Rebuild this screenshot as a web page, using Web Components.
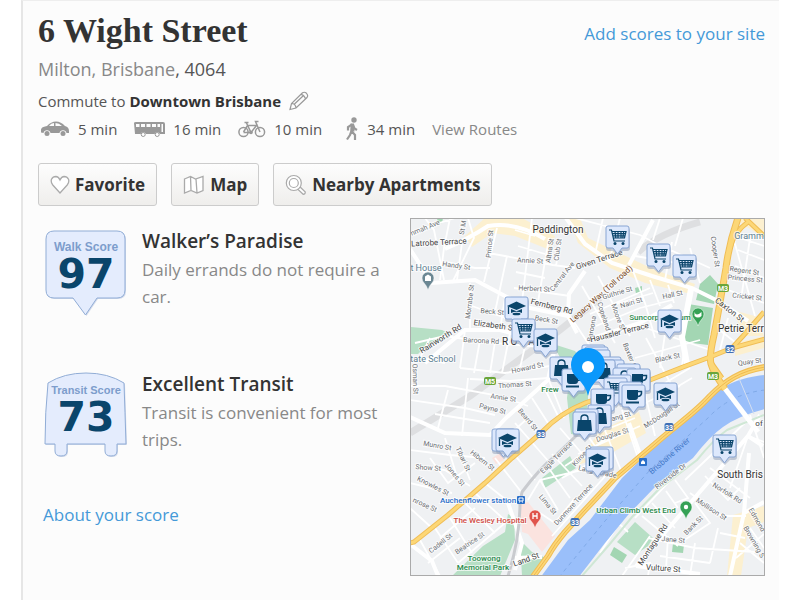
<!DOCTYPE html>
<html lang="en">
<head>
<meta charset="utf-8">
<meta name="viewport" content="width=device-width, initial-scale=1">
<title>6 Wight Street</title>
<style>
    body {
        margin: 0;
        background: #fff;
        color: #555;
        font-family: "Open Sans", "Noto Sans", sans-serif;
        font-size: 17px;
    }
</style>
</head>
<body>
<score-page>
    <address-header slot="header" street="6 Wight Street" postcode="4064">
        <commute-time icon="car">5 min</commute-time>
        <commute-time icon="bus">16 min</commute-time>
        <commute-time icon="bike">10 min</commute-time>
        <commute-time icon="walk">34 min</commute-time>
    </address-header>
    <action-button slot="actions" icon="heart">Favorite</action-button>
    <action-button slot="actions" icon="map">Map</action-button>
    <action-button slot="actions" icon="search">Nearby Apartments</action-button>
    <score-card kind="walk" label="Walk Score" value="97">
        <span slot="title">Walker’s Paradise</span>
        Daily errands do not require a car.
    </score-card>
    <score-card kind="transit" label="Transit Score" value="73">
        <span slot="title">Excellent Transit</span>
        Transit is convenient for most trips.
    </score-card>
    <area-map slot="map"></area-map>
</score-page>

<script>
const ICONS = {
    car: `<svg width="30" height="18" viewBox="0 0 30 18"><path fill="#999" fill-rule="evenodd" d="M1 12.5V9.500Q1.500 7 5 6.500L7 6Q11 1.500 16 1.500Q21 1.500 25 6Q29 7 29 11V13H26.500A3.600 3.600 0 0 0 19.500 13H10.500A3.600 3.600 0 0 0 3.500 13ZM9 6H14V3Q11 3.200 9 6ZM15.500 3V6H22Q19 3 15.500 3Z"/><circle cx="7" cy="13.500" r="2.500" fill="#999"/><circle cx="23" cy="13.500" r="2.500" fill="#999"/></svg>`,
    bus: `<svg width="31" height="18" viewBox="0 0 31 18"><path fill="#999" fill-rule="evenodd" d="M0 3Q0 2 2 2H29Q31 2 31 4V14H26A3 3 0 0 0 20.500 14H12A3 3 0 0 0 6.500 14H1ZM2 4V7H5.500V4ZM7 4V7H11V4ZM12.500 4V7H16.500V4ZM18 4V7H22V4ZM23.500 4V7H26V4ZM27.500 4V12H29V4Z"/><circle cx="9.200" cy="14.500" r="2" fill="#fff" stroke="#999"/><circle cx="23.200" cy="14.500" r="2" fill="#fff" stroke="#999"/></svg>`,
    bike: `<svg width="28" height="18" viewBox="0 0 28 18"><g fill="none" stroke="#999" stroke-width="1.500"><circle cx="5.500" cy="12" r="4.600"/><circle cx="22" cy="12" r="4.600"/><path d="M5.500 12L9.500 5.500H18.500L13 12.500L8.500 3M13 12.500H5.500M22 12L17.500 1.500H20.500M6.500 2.500H10.500"/></g><circle cx="13" cy="12.500" r="1.800" fill="#999"/></svg>`,
    walk: `<svg width="14" height="24" viewBox="0 0 14 24"><circle cx="9" cy="3" r="2.700" fill="#999"/><path d="M7.500 7L6.500 14L10 18V23M6.500 14L5 18L2 22.500M7 7.500L3 10V13.500M8 8L9.500 11.500L12 13" fill="none" stroke="#999" stroke-width="2.200"/><path d="M5.500 6.500H9L9.500 14.500H5.500Z" fill="#999"/></svg>`,
    pencil: `<svg width="20" height="20" viewBox="0 0 20 20"><path d="M1 18.500L2.500 12.500L13.500 1.800Q15.500 .5 17.500 2.300Q19.500 4.500 18 6.500L7 17ZM2.500 12.500Q6.500 12.500 7 17M12 3.300Q15.500 4 16.500 8M5.500 13L14 5" fill="none" stroke="#999" stroke-width="1.200"/></svg>`,
    heart: `<svg width="20" height="20" viewBox="0 0 20 20"><path d="M10 18L2.800 10Q.5 7 1.500 4.200Q3 1.500 5.800 1.500Q8.500 1.600 10 5Q11.500 1.600 14.200 1.500Q17 1.500 18.500 4.200Q19.500 7 17.200 10Z" fill="#fff" stroke="#aaa" stroke-width="1.300"/></svg>`,
    map: `<svg width="22" height="20" viewBox="0 0 22 20"><path d="M1.500 4L7.500 1.500L12.500 4L20 1.500V15.500L14 18L8 15.500L1.500 18ZM7.500 1.500L8 15.500M13 4L14 18" fill="#fff" stroke="#aaa" stroke-width="1.300"/></svg>`,
    search: `<svg width="22" height="22" viewBox="0 0 22 22"><g fill="#fff" stroke="#aaa" stroke-width="1.200"><path d="M12.500 15L14.800 12.700L20.300 18Q20.300 20.300 18.200 20.300Z"/><circle cx="8.800" cy="9" r="7.500"/><circle cx="8.800" cy="9" r="4.500"/></g></svg>`
};

class ScorePage extends HTMLElement {
    constructor() {
        super();
        this.attachShadow({ mode: 'open' });
    }

    connectedCallback() {
        this.shadowRoot.innerHTML = `
            <style>
                :host {
                    display: block;
                    box-sizing: border-box;
                    min-height: 100vh;
                    margin: 0 21px;
                    padding: 8px 14px 24px 15px;
                    background: #fcfcfc;
                    border-top: 1px solid #eee;
                    border-left: 2px solid #e6e6e6;
                }
                .actions {
                    display: flex;
                    flex-wrap: wrap;
                    gap: 14px;
                    margin: 21px 0 12px;
                }
                .body {
                    display: grid;
                    grid-template-columns: minmax(0, 1fr) minmax(0, 355px);
                    gap: 24px;
                }
                .scores {
                    display: flex;
                    flex-direction: column;
                    gap: 53px;
                    padding: 11px 0 0 6px;
                }
                a {
                    display: inline-block;
                    margin: 41px 0 0 5px;
                    color: #4499d8;
                    text-decoration: none;
                    line-height: 24px;
                }
            </style>
            <slot name="header"></slot>
            <div class="actions"><slot name="actions"></slot></div>
            <div class="body">
                <div>
                    <div class="scores"><slot></slot></div>
                    <a href="#about">About your score</a>
                </div>
                <slot name="map"></slot>
            </div>
        `;
    }
}

class AddressHeader extends HTMLElement {
    constructor() {
        super();
        this.attachShadow({ mode: 'open' });
    }

    connectedCallback() {
        this.shadowRoot.innerHTML = `
            <style>
                :host {
                    display: block;
                }
                .top {
                    display: flex;
                    justify-content: space-between;
                    align-items: center;
                }
                h1 {
                    margin: 0;
                    font: bold 34px/44px "Liberation Serif", serif;
                    color: #333;
                }
                a {
                    color: #888;
                    text-decoration: none;
                }
                .embed {
                    padding-top: 4px;
                    color: #4499d8;
                }
                .place {
                    font-size: 18px;
                    line-height: 33px;
                }
                .commute {
                    display: flex;
                    align-items: center;
                    gap: 8px;
                    font-size: 15px;
                    line-height: 30px;
                }
                .commute strong {
                    color: #333;
                }
                button {
                    display: flex;
                    padding: 0;
                    border: 0;
                    background: none;
                }
                .times {
                    display: flex;
                    flex-wrap: wrap;
                    align-items: center;
                    gap: 17px;
                    font-size: 15px;
                    line-height: 26px;
                }
            </style>
            <div class="top">
                <h1>${this.getAttribute('street')}</h1>
                <a class="embed" href="#embed">Add scores to your site</a>
            </div>
            <div class="place"><a href="#milton">Milton,</a> <a href="#brisbane">Brisbane</a>, ${this.getAttribute('postcode')}</div>
            <div class="commute">
                <span>Commute to <strong>Downtown Brisbane</strong></span>
                <button type="button" aria-label="Edit commute">${ICONS.pencil}</button>
            </div>
            <div class="times"><slot></slot><a href="#routes">View Routes</a></div>
        `;
    }
}

class CommuteTime extends HTMLElement {
    constructor() {
        super();
        this.attachShadow({ mode: 'open' });
    }

    connectedCallback() {
        this.shadowRoot.innerHTML = `
            <style>
                :host {
                    display: flex;
                    align-items: center;
                    gap: 8px;
                    padding-left: 2px;
                }
                :host([icon="bus"]), :host([icon="bike"]) {
                    padding-left: 0;
                }
                :host([icon="walk"]) {
                    padding-left: 6px;
                }
            </style>
            ${ICONS[this.getAttribute('icon')]}
            <span><slot></slot></span>
        `;
    }
}

class ActionButton extends HTMLElement {
    constructor() {
        super();
        this.attachShadow({ mode: 'open' });
    }

    connectedCallback() {
        this.shadowRoot.innerHTML = `
            <style>
                :host {
                    display: block;
                }
                button {
                    display: flex;
                    align-items: center;
                    gap: 5px;
                    height: 43px;
                    padding: 0 11px;
                    border: 1px solid #ccc;
                    border-radius: 3px;
                    background: linear-gradient(#fdfdfd, #efeeec);
                    color: #333;
                    font: bold 17px/24px "Open Sans", "Noto Sans", sans-serif;
                }
            </style>
            <button type="button">${ICONS[this.getAttribute('icon')]}<span><slot></slot></span></button>
        `;
    }
}

class ScoreCard extends HTMLElement {
    constructor() {
        super();
        this.attachShadow({ mode: 'open' });
    }

    connectedCallback() {
        const walk = this.getAttribute('kind') === 'walk';
        const shape = walk
            ? 'M10 2H73Q81 2 81 10V61Q81 69 73 69H53L41.500 86L29 69H10Q2 69 2 61V10Q2 2 10 2Z'
            : 'M4 11Q20 1 42 1Q64 1 80 11Q81 40 82 72H73V79Q73 84 67 84Q61 84 61 79V72H23V79Q23 84 17 84Q11 84 11 79V72H1Q1 40 4 11Z';

        this.shadowRoot.innerHTML = `
            <style>
                :host {
                    display: grid;
                    grid-template-columns: 84px minmax(0, 1fr);
                    gap: 14px;
                }
                svg {
                    display: block;
                }
                .label {
                    font: bold 12px "Liberation Sans", sans-serif;
                    fill: #7d9dcc;
                }
                .transit {
                    font-size: 11px;
                }
                .value {
                    font: bold 41px "DejaVu Sans", sans-serif;
                    fill: #0a456b;
                }
                h2 {
                    margin: 0 0 2px;
                    font-size: 19px;
                    font-weight: 600;
                    line-height: 25px;
                    color: #333;
                }
                p {
                    margin: 0;
                    line-height: 27px;
                    color: #888;
                }
            </style>
            <svg width="84" height="90" viewBox="0 0 84 90">
                <path d="${shape}" fill="#d5dcec" transform="translate(1 1)"/>
                <path d="${shape}" fill="#e4ecfd" stroke="#91add6"/>
                <text class="label ${walk ? '' : 'transit'}" x="42" y="22" text-anchor="middle">${this.getAttribute('label')}</text>
                <text class="value" x="42" y="59" text-anchor="middle">${this.getAttribute('value')}</text>
            </svg>
            <div>
                <h2><slot name="title"></slot></h2>
                <p><slot></slot></p>
            </div>
        `;
    }
}

// [text, x, y, angle, class]
const LABELS = [
    ['Paddington', 148, 15, 0, 'town'],
    ['nmah Ave', 16, 12, -22],
    ['Latrobe Terrace', 29, 27, -3, 'main'],
    ['St M', 55, 10, -80],
    ['Prince St', 82, 26, -85],
    ['Annie St', 120, 45, 3],
    ['Altna St', 142, 33, -82],
    ['Club St', 150, 32, -82],
    ['Handy St', 46, 50, 8],
    ['Herbert St', 124, 73, 3],
    ['Central Ave', 154, 60, -52],
    ['Fernberg Rd', 141, 91, 14, 'main'],
    ['Morrabe St', 62, 84, -83],
    ['Beck St', 82, 96, 5],
    ['Beck St', 136, 104, 10],
    ['Elizabeth St', 84, 110, 8, 'main'],
    ['Given Terrace', 190, 44, -18, 'main'],
    ['Legacy Way (Toll road)', 193, 78, -42, 'toll'],
    ['Guthrie St', 208, 77, -17],
    ['Nairi St', 222, 87, -17],
    ['Hall St', 263, 79, -12],
    ['Moore St', 206, 100, 70],
    ['Copeland St', 193, 103, 72],
    ['Baroona', 184, 111, -80],
    ['Cooper St', 303, 34, 82],
    ['Gramm', 339, 21, 0, 'place'],
    ['Regent St', 334, 55, 9],
    ['Princess St', 335, 63, 5],
    ['Cricket St', 337, 81, 6],
    ['Caxton St', 318, 94, 38, 'main'],
    ['Suncorp Stadium', 250, 102, 0, 'green'],
    ['Petrie Terr', 331, 114, 0, 'town'],
    ['Haussler Terrace', 210, 117, -14, 'main'],
    ['t House', 16, 53, 0, 'place'],
    ['Rainworth Rd', 32, 123, -32, 'main'],
    ['Baroona Rd', 71, 125, 3],
    ['R O S A L I E', 119, 127, 0, 'town'],
    ['tate School', 23, 144, 0, 'place'],
    ['Osman St', 3, 161, 88],
    ['Howard St', 118, 152, -12],
    ['Thomas St', 105, 169, -4],
    ['Frew', 140, 174, 0, 'green'],
    ['Annie St', 93, 182, 8],
    ['Payne St', 82, 193, 14],
    ['Beard St', 116, 203, 50],
    ['Munro St', 27, 230, 10],
    ['Eagle Terrace', 148, 241, -45],
    ['Baxter St', 218, 139, 68],
    ['Black St', 258, 142, -12],
    ['Quay St', 340, 146, -8],
    ['McDougall St', 253, 199, -34],
    ['Douglas St', 203, 219, -17],
    ['Boomerang St', 200, 204, -17],
    ['Kilroe St', 174, 239, -48],
    ['Lang Parade', 187, 256, 12],
    ['Brisbane River', 261, 240, -41, 'river'],
    ['Riverside Dr', 262, 260, -38],
    ['of', 349, 208, 0, 'main'],
    ['South Bris', 330, 260, 0, 'town'],
    ['Show St', 18, 252, 4],
    ['Knowles St', 22, 270, 27],
    ['nrose St', 14, 289, 24],
    ['Jones St', 43, 258, 50],
    ['Tibari St', 51, 242, 65],
    ['Hibern St', 71, 244, 38],
    ['Auchenflower station', 68, 285, 0, 'rail'],
    ['The Wesley Hospital', 80, 305, 0, 'hospital'],
    ['Toowong', 74, 343, 0, 'green'],
    ['Memorial Park', 73, 352, 0, 'green'],
    ['Cadell St', 32, 327, -38],
    ['Beatrice St', 61, 327, -34],
    ['Land St', 117, 344, -20, 'main'],
    ['Lima St', 136, 288, 50],
    ['Dunmore Terrace', 165, 288, -48],
    ['Urban Climb West End', 226, 295, 0, 'green'],
    ['Norfolk Rd', 316, 277, 32],
    ['Mollison St', 300, 293, 33],
    ['Bank St', 285, 309, -45],
    ['Jane St', 263, 324, 5],
    ['Montague Rd', 245, 328, -57, 'main'],
    ['Vulture St', 253, 353, 4, 'main'],
    ['Browning S', 342, 325, 60],
    ['Edmond', 345, 303, 60]
];

// [icon, x, y], back to front; an empty icon is a marker hidden by its neighbours
const MARKERS = [
    ['cart', 196, 8], ['cart', 237, 26], ['cart', 263, 37],
    ['cap', 95, 79], ['cart', 102, 101], ['cap', 124, 111], ['cap', 248, 92],
    ['bag', 140, 139], ['cup', 152, 151],
    ['', 172, 127], ['', 175, 129], ['', 177, 132], ['', 188, 139], ['', 191, 142],
    ['bag', 182, 142], ['', 207, 146], ['bag', 203, 150], ['cup', 217, 151],
    ['', 198, 157], ['cart', 194, 160], ['', 209, 164], ['cup', 212, 167],
    ['cap', 244, 165], ['cup', 181, 171], ['bag', 178, 187], ['', 165, 191], ['bag', 163, 194],
    ['', 82, 211], ['cap', 86, 211], ['', 180, 229], ['cap', 176, 231], ['cart', 303, 217]
];

// [text, x, y, fill]
const SHIELDS = [
    ['M3', 313, 70, '#6aa53a'], ['M5', 80, 163, '#6aa53a'], ['M3', 303, 158, '#6aa53a'],
    ['33', 131, 216, '#3f6fb5'], ['32', 320, 131, '#3f6fb5'], ['33', 259, 209, '#3f6fb5'], ['33', 165, 304, '#3f6fb5']
];

const RIVER_ROAD = 'M355 149C330 153 315 163 300 178C285 195 265 208 245 226L205 260L175 292L155 314Q144 327 138 338L122 360';
const MILTON_ROAD = 'M0 325L4 324L38 297L75 265L102 240L132 214Q150 195 175 185L240 162L273 149L300 139L322 130L355 121';
const M3_ROAD = 'M328 0Q319 25 316 50L309 90L304 117Q299 138 301 146T315 171';

class AreaMap extends HTMLElement {
    constructor() {
        super();
        this.attachShadow({ mode: 'open' });
    }

    label([text, x, y, angle, kind = 'street']) {
        return `<text class="${kind}" x="${x}" y="${y}" transform="rotate(${angle} ${x} ${y})">${text}</text>`;
    }

    marker([icon, x, y]) {
        return `<g transform="translate(${x} ${y})"><use href="#tag"/>${icon ? `<use href="#${icon}"/>` : ''}</g>`;
    }

    shield([text, x, y, fill]) {
        const w = text[0] === 'M' ? 12 : 9;
        return `<rect x="${x - w / 2}" y="${y - 4}" width="${w}" height="8" rx="2" fill="${fill}"/><text class="shield" x="${x}" y="${y + 3}">${text}</text>`;
    }

    connectedCallback() {
        this.shadowRoot.innerHTML = `
            <style>
                :host {
                    display: block;
                    align-self: start;
                    border: 1px solid #aaa;
                }
                svg {
                    display: block;
                    width: 100%;
                    height: auto;
                }
                text {
                    font-family: Roboto, "Liberation Sans", sans-serif;
                    font-size: 7px;
                    text-anchor: middle;
                    fill: #6b6f73;
                    stroke: #fff;
                    stroke-width: 2px;
                    stroke-opacity: .7;
                    paint-order: stroke;
                }
                .main { font-size: 8px; fill: #444; }
                .town { font-size: 10px; fill: #333; }
                .place { font-size: 9px; fill: #5d7f92; }
                .green { font-size: 8px; font-weight: 500; fill: #2a8a4c; }
                .toll { font-size: 8px; fill: #744318; }
                .river { font-size: 8px; fill: #4378c8; stroke: none; }
                .rail { font-size: 8px; font-weight: 500; fill: #2a6fc9; }
                .hospital { font-size: 8px; font-weight: 500; fill: #d04a42; }
                .shield { font-size: 7px; font-weight: bold; fill: #fff; stroke: none; }
            </style>
            <svg viewBox="1 1 353 356" role="img" aria-label="Map of Milton, Brisbane">
                <defs>
                    <g id="tag">
                        <path d="M3 1H21Q24 1 24 4V21Q24 24 21 24H17L12 29L7 24H3Q0 24 0 21V4Q0 1 3 1Z" fill="#8d9bb5" opacity=".5" transform="translate(0 1)"/>
                        <path d="M2 0H21Q23 0 23 2V20Q23 22 21 22H16L11.500 28L7 22H2Q0 22 0 20V2Q0 0 2 0Z" fill="#dde8fc" stroke="#88a5d3"/>
                    </g>
                    <g id="cart">
                        <path d="M3 4H5.500L8 15H19M5.500 5.500H20L18.500 12H7M6.500 7.700H19.500M7 9.800H19M9 5.500L9.800 12M12 5.500V12M15 5.500V12M17.700 5.500L16.800 12" fill="none" stroke="#0a456b" stroke-width="1.200"/>
                        <circle cx="9" cy="17.500" r="1.500" fill="#0a456b"/><circle cx="17" cy="17.500" r="1.500" fill="#0a456b"/>
                    </g>
                    <g id="cap" fill="#0a456b">
                        <path d="M2 9L11.500 4.500L21 9L11.500 13Z"/>
                        <path d="M6 12L11.500 14.300L17 12V16Q11.500 13.500 6 16Z"/>
                        <path d="M3.500 9.500V17" stroke="#0a456b" stroke-width="1.300"/>
                        <ellipse cx="11.500" cy="17" rx="4" ry="1.300"/>
                    </g>
                    <g id="bag">
                        <path d="M5 8H18L19 19H4Z" fill="#0a456b"/>
                        <path d="M8 10V6.500Q8 3 11.500 3Q15 3 15 6.500V10" fill="none" stroke="#0a456b" stroke-width="1.300"/>
                    </g>
                    <g id="cup">
                        <path d="M5 5H16V12Q16 15 13 15H8Q5 15 5 12ZM4 16.500H17V18.500H4Z" fill="#0a456b"/>
                        <path d="M16 6.500H19.500Q20 11 16 11.500" fill="none" stroke="#0a456b" stroke-width="1.500"/>
                    </g>
                    <path id="drop" d="M0 10Q-1 6 -4 3Q-6 1 -6 -2A6 6 0 0 1 6 -2Q6 1 4 3Q1 6 0 10Z"/>
                </defs>
                <rect width="360" height="360" fill="#eff1f3"/>
                <!-- tunnels -->
                <path d="M0 215L60 178L150 112L190 80M228 34Q250 15 290 4" fill="none" stroke="#dedfe1" stroke-width="7"/>
                <!-- shopping areas -->
                <g fill="#fcf0d0">
                    <path d="M55 18L75 0H112L145 18L140 32L105 18L82 15L62 29ZM158 0H170L178 20L245 52L285 66L281 76L235 65L200 50L168 25Z"/>
                    <path d="M323 297L354 288V304L338 310L331 358H317ZM190 213L229 194L236 215L200 236L165 248ZM322 92L345 98L354 118H335ZM323 0H354V20ZM325 125L354 118V130L325 138Z"/>
                </g>
                <!-- parks -->
                <g fill="#b7dfc5">
                    <path d="M0 109L32 112L42 117L14 130L8 136H0ZM140 125L165 133L178 150L178 184L172 218L161 216L157 180Q162 150 140 125Z"/>
                    <path d="M98 296L104 300L105 322L90 358H42L73 328L95 314ZM110 322L122 334L136 340L120 358H112ZM132 260L160 238L166 250L135 270Z"/>
                    <path d="M225 304L243 320L238 328L225 337L207 324Z"/>
                </g>
                <g fill="#a3d6b3">
                    <path d="M278 86L303 90L298 127L274 124ZM290 66L300 57L308 66L304 86L286 82ZM204 329L217 337L212 345L200 337ZM263 325L274 327L273 335L262 334ZM225 70L232 68V75L226 76ZM27 0H33L32 5L28 6Z"/>
                </g>
                <path d="M110 286L118 284L145 318L132 334L118 316L112 314ZM82 240L92 234L94 242L86 246Z" fill="#fbe3df"/>
                <!-- residential streets -->
                <g fill="none" stroke="#fff" stroke-width="1.800">
                    <path d="M0 17L20 8L45 0M15 0L24 12L34 62M40 0L34 30L30 62M58 0L64 20L42 65M52 25L47 62M87 10L74 64M36 44L65 50H80M78 35L95 38L143 47L165 50M97 38L85 94M105 12L125 18M108 28L135 36M106 54L135 60M104 70L160 78M122 0L112 84M139 20L128 84M150 25L146 48M60 65V110M62 88L90 98L118 108M95 80L90 112"/>
                    <path d="M158 95L180 128M172 68L205 125M188 58L220 118M186 108L230 90L262 82M180 96L240 70M200 88L243 75M222 50L235 85L245 120M240 62L250 88M258 67L264 85M165 0L230 17L245 25M193 0L186 32M210 0L200 40M250 0L243 22M262 24L255 62M273 0L265 28M225 38L285 48M245 25L300 50M280 30L290 65"/>
                    <path d="M330 20L354 28M328 32L354 42M325 48L354 60M318 72L354 85M322 15L345 98M340 20L332 75M230 108L300 132M236 120L262 168M255 116L250 150M275 125L272 148M225 140L290 122M307 110L330 128M318 100L310 132"/>
                    <path d="M5 125L35 118L75 124L140 130M55 112L50 150M70 122L64 155M85 124L80 155M50 150L95 155L140 148M60 161L100 163L138 160M0 168L35 168L90 178L118 188M0 182L55 190L85 197M25 196L80 205M58 160L52 218M38 172L28 210M20 120L10 140L35 145M100 115L92 155M117 120L110 150"/>
                    <path d="M138 160L154 200M132 165L150 202M122 180L138 205M108 192L132 220M105 205L140 245M95 225L125 262M85 240L112 275M75 265L100 285M65 275L98 305M55 285L85 315M40 300L62 335M25 310L48 345M90 225L118 200M0 232L40 237L75 240M20 240L38 265L65 245M5 248L35 252L60 268M0 265L42 275M0 290L22 310M35 220L48 262M50 236L60 262M10 322L30 358M30 320L65 290M18 345L50 320M48 345L95 305"/>
                    <path d="M150 210L180 245M165 200L190 235M180 218L225 200M168 236L230 208M190 200L212 255M212 192L228 240M235 175L245 218M155 248L205 215M152 260L200 235M118 282L130 262L180 250M130 262L148 292M140 252L160 280M142 318L198 255M130 295L145 305L165 280M225 190L270 168M250 168L280 150M245 182L282 160M142 236L172 268"/>
                    <path d="M212 358L240 318M225 300L270 252M190 335L238 260M232 298L268 328M242 285L265 310M218 314L205 302M265 262L278 280L265 285M256 273L268 290M300 250L340 280M295 258L318 282L330 270M280 275L312 298H336M285 285L300 305L270 325M238 320L285 330L345 334M250 338L300 345M258 318L256 352M285 325L280 358M308 310L300 345M320 270L338 218M340 197L354 240M338 218L354 224M275 262L340 200M330 325L354 345M340 310L354 330M326 340L354 316M215 350L240 345L238 358M310 315L335 320"/>
                </g>
                <!-- through roads -->
                <g fill="none" stroke="#fff" stroke-width="4">
                    <path d="M0 31L22 65L65 62L95 78L120 90L158 98L167 115M35 31Q60 20 78 8Q105 3 135 21M158 98L159 76L175 53M156 0L175 26L202 45L242 58L282 70L308 83L338 103M219 47L243 2M0 199L35 215L80 217L96 200L138 162L146 124M15 145L55 112L90 112L120 120"/>
                    <path d="M262 87L230 105L180 121M219 205L232 242M353 228L338 218L226 348M338 218L350 197M339 235L334 295L320 358M334 295L354 284M226 348L290 356M98 285L112 325L105 352M0 326L22 343L28 358M105 340L132 339"/>
                    <path d="M281 71L272 119L277 146" stroke-width="6"/>
                </g>
                <path d="M98 358Q110 320 110 285L112 274Q130 250 145 238L168 216" fill="none" stroke="#c9cbcf" stroke-width="3"/>
                <!-- river -->
                <path d="M355 157C330 160 316 166 304 177C285 196 268 208 253 220L212 260L180 302L158 322L130 360H168L195 325L218 297L245 269L283 240Q300 218 313 209Q328 198 355 191Z" fill="#9abffa"/>
                <path d="M355 172Q320 176 298 200L240 252L195 303L150 358" fill="none" stroke="#80aae8" stroke-dasharray="4 4"/>
                <path d="M172 358L199 327L222 299L249 271L287 242Q304 221 317 212L354 197" fill="none" stroke="#cfe7d5" stroke-width="2"/>
                <path d="M328 158L344 196" fill="none" stroke="#d5dff0" stroke-width="1"/>
                <path d="M313 168L348 214" stroke="#fff" stroke-width="5"/>
                <!-- highways -->
                <g fill="none" stroke="#f0bd55">
                    <path d="${RIVER_ROAD}" stroke-width="6"/>
                    <path d="${MILTON_ROAD}" stroke-width="5"/>
                    <path d="${M3_ROAD}" stroke-width="7"/>
                    <path d="M335 0L354 18M354 94L333 118L322 130M320 30Q324 14 338 4M300 143L312 160" stroke-width="5"/>
                </g>
                <g fill="none" stroke="#fcd777">
                    <path d="${RIVER_ROAD}" stroke-width="4"/>
                    <path d="${MILTON_ROAD}" stroke-width="3"/>
                    <path d="${M3_ROAD}" stroke-width="5"/>
                    <path d="M335 0L354 18M354 94L333 118L322 130M320 30Q324 14 338 4M300 143L312 160" stroke-width="3"/>
                </g>
                <path d="${RIVER_ROAD}" fill="none" stroke="#efb94f" stroke-width="1"/>
                ${LABELS.map(this.label).join('')}
                ${SHIELDS.map(this.shield).join('')}
                <!-- places -->
                <g stroke="#fff" stroke-width=".5">
                    <use href="#drop" x="18" y="62" fill="#6b8793"/>
                    <use href="#drop" x="288" y="98" fill="#35a155"/>
                    <use href="#drop" x="276" y="291" fill="#35a155"/>
                    <use href="#drop" x="125" y="300" fill="#e0544c"/>
                </g>
                <path d="M15 58.500L18 56.500L21 58.500V63H15Z" fill="#fff"/>
                <path d="M284.500 94Q286 99 291.500 94V98Q288 101 284.500 98Z" fill="#fff"/>
                <circle cx="276" cy="289" r="2.200" fill="#fff"/>
                <path d="M123 295V301M127 295V301M123 298H127" stroke="#fff" stroke-width="1.300"/>
                <rect x="107" y="278" width="8" height="8" rx="1" fill="#2a6fc9"/>
                <path d="M109 280H113V283H109ZM109 284H110M112 284H113" fill="none" stroke="#fff"/>
                <rect x="229" y="240" width="8" height="8" rx="1" fill="#2a6fc9"/>
                <path d="M231 246V244L233 242L235 244V246Z" fill="#fff"/>
                ${MARKERS.map(this.marker).join('')}
                <path d="M178 178Q176 168 167 160Q161 154 161 147A17 17 0 0 1 195 147Q195 154 189 160Q180 168 178 178Z" fill="#0a98fb"/>
                <circle cx="178" cy="149" r="6" fill="#fff"/>
            </svg>
        `;
    }
}

customElements.define('score-page', ScorePage);
customElements.define('address-header', AddressHeader);
customElements.define('commute-time', CommuteTime);
customElements.define('action-button', ActionButton);
customElements.define('score-card', ScoreCard);
customElements.define('area-map', AreaMap);
</script>
</body>
</html>
